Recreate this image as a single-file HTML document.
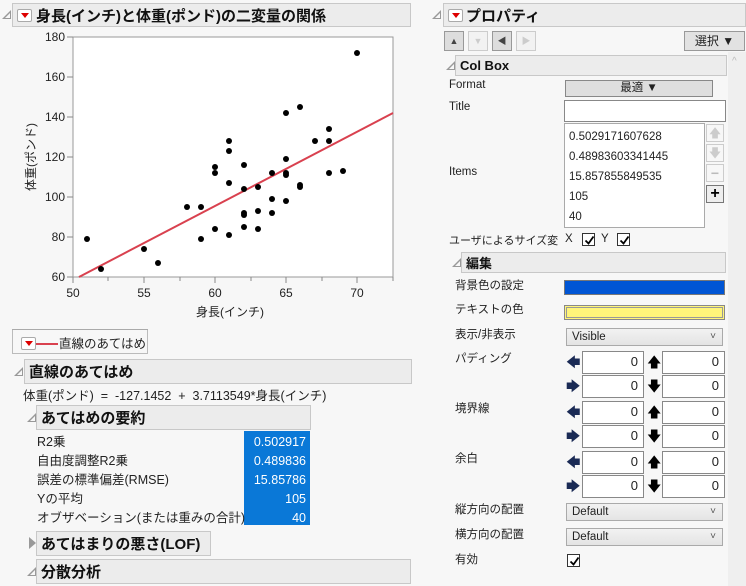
<!DOCTYPE html>
<html><head><meta charset="utf-8">
<style>
*{box-sizing:border-box;margin:0;padding:0}
body{width:746px;height:586px;background:#f7f7f7;position:relative;overflow:hidden;font-family:"Liberation Sans","Noto Sans CJK JP",sans-serif;font-size:12px;color:#222}
.a{position:absolute;white-space:nowrap}
.hdr{position:absolute;background:#ececec;border:1px solid #c8c8c8;font-weight:bold;font-size:15px;color:#111;padding-left:4px;display:flex;align-items:center}
.tri{position:absolute;width:0;height:0;border-left:9px solid transparent;border-bottom:9px solid #999}
.tri::after{content:"";position:absolute;left:-6px;top:3px;border-left:5px solid transparent;border-bottom:5px solid #f7f7f7}
.rb{display:inline-block;width:15px;height:13px;border:1px solid #aaa;background:#fff;border-radius:2px;position:relative;vertical-align:middle}
.rb::after{content:"";position:absolute;left:3px;top:3px;border-left:4px solid transparent;border-right:4px solid transparent;border-top:5px solid #d00}
.lbl{position:absolute;font-size:11.5px;color:#222;white-space:nowrap}
.box{position:absolute;background:#fff;border:1px solid #888}
.num{position:absolute;background:#fff;border:1px solid #888;text-align:right;padding-right:5px;font-size:13px;line-height:20px}
.dd{position:absolute;background:linear-gradient(#f2f2f2,#e4e4e4);border:1px solid #aaa;font-size:11.5px;padding-left:5px;line-height:16px}
.dd::after{content:"˅";position:absolute;right:6px;top:0;font-size:10px;color:#555}
.arr{position:absolute;font-size:14px;color:#1a2a55;line-height:14px}
.cb{position:absolute;width:13px;height:13px;border:1px solid #333;background:#fff}
.cb svg{position:absolute;left:1px;top:1px}
.nb{position:absolute;width:20px;height:20px;border:1px solid #aaa;font-size:9px;text-align:center;line-height:18px}
</style></head><body>

<div class="tri" style="left:2px;top:10px"></div>
<div class="hdr" style="left:12px;top:3px;width:399px;height:24px"><span class="rb" style="margin-right:4px"></span>身長(インチ)と体重(ポンド)の二変量の関係</div>

<svg class="a" style="left:0;top:28px" width="420" height="300" viewBox="0 28 420 300">
<rect x="73" y="37" width="320" height="240" fill="#fff" stroke="#999"/>
<g stroke="#888" stroke-width="1">
<line x1="67" y1="37" x2="73" y2="37"/><line x1="67" y1="77" x2="73" y2="77"/><line x1="67" y1="117" x2="73" y2="117"/><line x1="67" y1="157" x2="73" y2="157"/><line x1="67" y1="197" x2="73" y2="197"/><line x1="67" y1="237" x2="73" y2="237"/><line x1="67" y1="277" x2="73" y2="277"/>
<line x1="73" y1="277" x2="73" y2="283"/><line x1="144" y1="277" x2="144" y2="283"/><line x1="215" y1="277" x2="215" y2="283"/><line x1="286" y1="277" x2="286" y2="283"/><line x1="357" y1="277" x2="357" y2="283"/>
<line x1="108" y1="277" x2="108" y2="281"/><line x1="180" y1="277" x2="180" y2="281"/><line x1="251" y1="277" x2="251" y2="281"/><line x1="322" y1="277" x2="322" y2="281"/><line x1="393" y1="277" x2="393" y2="281"/>
</g>
<g font-family="Liberation Sans,sans-serif" font-size="12" fill="#222" text-anchor="end">
<text x="65" y="41">180</text><text x="65" y="81">160</text><text x="65" y="121">140</text><text x="65" y="161">120</text><text x="65" y="201">100</text><text x="65" y="241">80</text><text x="65" y="281">60</text>
</g>
<g font-family="Liberation Sans,sans-serif" font-size="12" fill="#222" text-anchor="middle">
<text x="73" y="297">50</text><text x="144" y="297">55</text><text x="215" y="297">60</text><text x="286" y="297">65</text><text x="357" y="297">70</text>
</g>
<text x="230" y="316" font-size="12" fill="#222" text-anchor="middle" font-family="Liberation Sans,Noto Sans CJK JP,sans-serif">身長(インチ)</text>
<text transform="translate(35,157) rotate(-90)" font-size="12" fill="#222" text-anchor="middle" font-family="Liberation Sans,Noto Sans CJK JP,sans-serif">体重(ポンド)</text>
<line x1="79" y1="277" x2="393" y2="113" stroke="#d9414f" stroke-width="2"/>
<g fill="#000">
<circle cx="87" cy="239" r="3"/><circle cx="101" cy="269" r="3"/><circle cx="144" cy="249" r="3"/><circle cx="158" cy="263" r="3"/><circle cx="187" cy="207" r="3"/><circle cx="201" cy="207" r="3"/><circle cx="201" cy="239" r="3"/><circle cx="215" cy="167" r="3"/><circle cx="215" cy="173" r="3"/><circle cx="215" cy="229" r="3"/><circle cx="229" cy="141" r="3"/><circle cx="229" cy="151" r="3"/><circle cx="229" cy="183" r="3"/><circle cx="229" cy="235" r="3"/><circle cx="244" cy="165" r="3"/><circle cx="244" cy="189" r="3"/><circle cx="244" cy="213" r="3"/><circle cx="244" cy="215" r="3"/><circle cx="244" cy="227" r="3"/><circle cx="258" cy="187" r="3"/><circle cx="258" cy="211" r="3"/><circle cx="258" cy="229" r="3"/><circle cx="272" cy="173" r="3"/><circle cx="272" cy="199" r="3"/><circle cx="272" cy="213" r="3"/><circle cx="286" cy="113" r="3"/><circle cx="286" cy="159" r="3"/><circle cx="286" cy="173" r="3"/><circle cx="286" cy="175" r="3"/><circle cx="286" cy="201" r="3"/><circle cx="300" cy="107" r="3"/><circle cx="300" cy="185" r="3"/><circle cx="300" cy="187" r="3"/><circle cx="315" cy="141" r="3"/><circle cx="329" cy="129" r="3"/><circle cx="329" cy="141" r="3"/><circle cx="329" cy="173" r="3"/><circle cx="343" cy="171" r="3"/><circle cx="357" cy="53" r="3"/>
</g>
</svg>
<div class="a" style="left:12px;top:329px;width:136px;height:1px;background:#aaa"></div>

<div class="a" style="left:12px;top:330px;width:136px;height:24px;border:1px solid #bbb;border-top:none;background:#f7f7f7"></div>
<span class="rb a" style="left:21px;top:336px"></span>
<div class="a" style="left:36px;top:343px;width:22px;height:2px;background:#d9414f"></div>
<div class="a" style="left:59px;top:333px;font-size:12.5px">直線のあてはめ</div>

<div class="tri" style="left:14px;top:367px"></div>
<div class="hdr" style="left:24px;top:359px;width:388px;height:25px">直線のあてはめ</div>
<div class="a" style="left:23px;top:385px;font-size:12.5px">体重(ポンド) &nbsp;= &nbsp;-127.1452 &nbsp;+ &nbsp;3.7113549*身長(インチ)</div>

<div class="tri" style="left:27px;top:413px"></div>
<div class="hdr" style="left:36px;top:405px;width:275px;height:25px">あてはめの要約</div>
<div class="a" style="left:244px;top:431px;width:66px;height:94px;background:#0a78d7"></div>
<div class="a" style="left:37px;top:433px;line-height:19px;font-size:12.5px">R2乗<br>自由度調整R2乗<br>誤差の標準偏差(RMSE)<br>Yの平均<br>オブザベーション(または重みの合計)</div>
<div class="a" style="left:244px;top:433px;width:62px;text-align:right;line-height:19px;font-size:12.5px;color:#fff">0.502917<br>0.489836<br>15.85786<br>105<br>40</div>

<div class="a" style="left:29px;top:537px;width:0;height:0;border-top:6px solid transparent;border-bottom:6px solid transparent;border-left:7px solid #999"></div>
<div class="hdr" style="left:36px;top:531px;width:175px;height:25px">あてはまりの悪さ(LOF)</div>
<div class="tri" style="left:27px;top:567px"></div>
<div class="hdr" style="left:36px;top:559px;width:375px;height:25px">分散分析</div>

<div class="a" style="left:728px;top:52px;width:18px;height:534px;background:#efefef"></div>
<div class="a" style="left:732px;top:56px;font-size:10px;color:#bbb">^</div>
<div class="tri" style="left:432px;top:10px"></div>
<div class="hdr" style="left:443px;top:3px;width:303px;height:24px;padding-left:4px"><span class="rb" style="margin-right:3px"></span>プロパティ</div>

<div class="nb" style="left:444px;top:31px;background:#ddd;border-color:#999;color:#444">▲</div>
<div class="nb" style="left:468px;top:31px;background:#f2f2f2;border-color:#ccc;color:#ccc">▼</div>
<div class="nb" style="left:492px;top:31px;background:#ddd;border-color:#999;color:#444">◀</div>
<div class="nb" style="left:516px;top:31px;background:#f2f2f2;border-color:#ccc;color:#ccc">▶</div>
<div class="a" style="left:684px;top:31px;width:61px;height:20px;background:#e2e2e2;border:1px solid #999;text-align:center;line-height:18px;font-size:12px">選択 ▼</div>

<div class="tri" style="left:446px;top:61px"></div>
<div class="hdr" style="left:455px;top:55px;width:272px;height:21px;font-size:13px">Col Box</div>

<div class="lbl" style="left:449px;top:79px">Format</div>
<div class="a" style="left:565px;top:80px;width:148px;height:17px;background:#dedede;border:1px solid #888;text-align:center;font-size:11.5px;line-height:15px">最適 ▼</div>
<div class="lbl" style="left:449px;top:101px">Title</div>
<div class="box" style="left:564px;top:100px;width:162px;height:22px"></div>
<div class="box" style="left:564px;top:123px;width:141px;height:105px;border-color:#aaa"></div>
<div class="a" style="left:569px;top:127px;line-height:20px;font-size:11.5px">0.5029171607628<br>0.48983603341445<br>15.857855849535<br>105<br>40</div>
<div class="lbl" style="left:449px;top:166px">Items</div>
<div class="nb" style="left:706px;top:124px;width:18px;height:18px;border-color:#ccc;color:#ccc;font-size:12px;line-height:16px">🡅</div>
<div class="nb" style="left:706px;top:144px;width:18px;height:18px;border-color:#ccc;color:#ccc;font-size:12px;line-height:16px">🡇</div>
<div class="nb" style="left:706px;top:164px;width:18px;height:18px;border-color:#ccc;color:#bbb;font-size:14px;line-height:16px;font-weight:bold">−</div>
<div class="nb" style="left:706px;top:185px;width:18px;height:18px;border-color:#777;background:#eee;color:#000;font-size:16px;line-height:16px;font-weight:bold">+</div>

<div class="lbl" style="left:449px;top:232px;font-size:11px">ユーザによるサイズ変</div>
<div class="lbl" style="left:565px;top:233px">X</div>
<div class="cb" style="left:582px;top:233px"><svg width="11" height="11"><path d="M1.5 5.5 L4.5 8.5 L9.5 1.5" stroke="#000" stroke-width="1.8" fill="none"/></svg></div>
<div class="lbl" style="left:601px;top:233px">Y</div>
<div class="cb" style="left:617px;top:233px"><svg width="11" height="11"><path d="M1.5 5.5 L4.5 8.5 L9.5 1.5" stroke="#000" stroke-width="1.8" fill="none"/></svg></div>

<div class="tri" style="left:452px;top:258px"></div>
<div class="hdr" style="left:461px;top:252px;width:265px;height:21px;font-size:13px">編集</div>

<div class="lbl" style="left:455px;top:277px">背景色の設定</div>
<div class="a" style="left:564px;top:280px;width:161px;height:15px;background:#0055d4;border:1px solid #777"></div>
<div class="lbl" style="left:455px;top:301px">テキストの色</div>
<div class="a" style="left:564px;top:305px;width:161px;height:15px;background:#fff57a;border:1px solid #888;box-shadow:inset 0 0 0 1px #fff57a,inset 0 0 0 2px #999"></div>
<div class="lbl" style="left:455px;top:326px">表示/非表示</div>
<div class="dd" style="left:566px;top:328px;width:157px;height:18px">Visible</div>

<div class="lbl" style="left:455px;top:350px">パディング</div>
<div class="lbl" style="left:455px;top:400px">境界線</div>
<div class="lbl" style="left:455px;top:450px">余白</div>

<div class="arr" style="left:566px;top:355px">🡄</div><div class="num" style="left:582px;top:351px;width:62px;height:23px">0</div><div class="arr" style="left:647px;top:355px;color:#000">🡅</div><div class="num" style="left:662px;top:351px;width:63px;height:23px">0</div>
<div class="arr" style="left:566px;top:379px">🡆</div><div class="num" style="left:582px;top:375px;width:62px;height:23px">0</div><div class="arr" style="left:647px;top:379px;color:#000">🡇</div><div class="num" style="left:662px;top:375px;width:63px;height:23px">0</div>
<div class="arr" style="left:566px;top:405px">🡄</div><div class="num" style="left:582px;top:401px;width:62px;height:23px">0</div><div class="arr" style="left:647px;top:405px;color:#000">🡅</div><div class="num" style="left:662px;top:401px;width:63px;height:23px">0</div>
<div class="arr" style="left:566px;top:429px">🡆</div><div class="num" style="left:582px;top:425px;width:62px;height:23px">0</div><div class="arr" style="left:647px;top:429px;color:#000">🡇</div><div class="num" style="left:662px;top:425px;width:63px;height:23px">0</div>
<div class="arr" style="left:566px;top:455px">🡄</div><div class="num" style="left:582px;top:451px;width:62px;height:23px">0</div><div class="arr" style="left:647px;top:455px;color:#000">🡅</div><div class="num" style="left:662px;top:451px;width:63px;height:23px">0</div>
<div class="arr" style="left:566px;top:479px">🡆</div><div class="num" style="left:582px;top:475px;width:62px;height:23px">0</div><div class="arr" style="left:647px;top:479px;color:#000">🡇</div><div class="num" style="left:662px;top:475px;width:63px;height:23px">0</div>

<div class="lbl" style="left:455px;top:501px">縦方向の配置</div>
<div class="dd" style="left:566px;top:503px;width:157px;height:18px">Default</div>
<div class="lbl" style="left:455px;top:526px">横方向の配置</div>
<div class="dd" style="left:566px;top:528px;width:157px;height:18px">Default</div>
<div class="lbl" style="left:455px;top:551px">有効</div>
<div class="cb" style="left:567px;top:554px"><svg width="11" height="11"><path d="M1.5 5.5 L4.5 8.5 L9.5 1.5" stroke="#000" stroke-width="1.8" fill="none"/></svg></div>
</body></html>
